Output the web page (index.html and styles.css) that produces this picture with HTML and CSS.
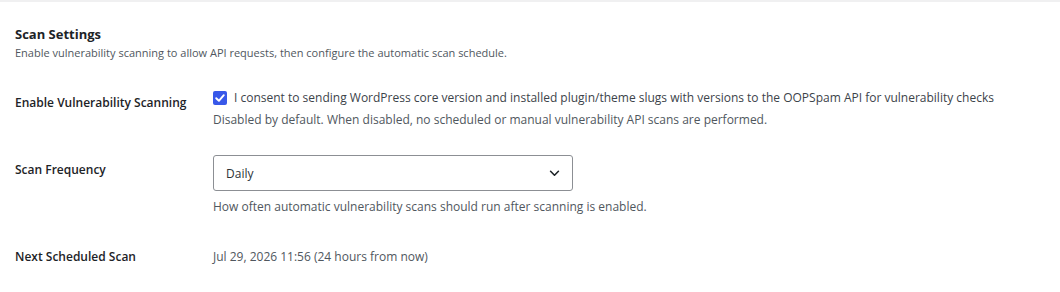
FILE: index.html
```html
<!DOCTYPE html>
<html lang="en">
<head>
  <meta charset="UTF-8" />
  <meta name="viewport" content="width=device-width, initial-scale=1" />
  <title>Scan Settings</title>
  <link rel="stylesheet" href="styles.css">
</head>
<body>
  <div class="settings-panel">
    <h2 class="section-title">Scan Settings</h2>
    <p class="section-desc">Enable vulnerability scanning to allow API requests, then configure the automatic scan schedule.</p>

    <div class="form-table">
      <div class="row">
        <div class="row-label">Enable Vulnerability Scanning</div>
        <div class="row-field">
          <label class="consent">
            <span class="checkbox">
              <svg viewBox="0 0 14 14" width="14" height="14"><path d="M3.2 7.2 L5.9 9.8 L10.8 4.2" fill="none" stroke="#fff" stroke-width="1.9" stroke-linecap="round" stroke-linejoin="round"/></svg>
            </span>
            I consent to sending WordPress core version and installed plugin/theme slugs with versions to the OOPSpam API for vulnerability checks
          </label>
          <p class="field-desc">Disabled by default. When disabled, no scheduled or manual vulnerability API scans are performed.</p>
        </div>
      </div>

      <div class="row">
        <div class="row-label">Scan Frequency</div>
        <div class="row-field">
          <div class="select">
            <span>Daily</span>
            <svg viewBox="0 0 12 8" width="11" height="7"><path d="M1.5 1.5 L6 6 L10.5 1.5" fill="none" stroke="#1d2327" stroke-width="1.8" stroke-linecap="round" stroke-linejoin="round"/></svg>
          </div>
          <p class="field-desc">How often automatic vulnerability scans should run after scanning is enabled.</p>
        </div>
      </div>

      <div class="row">
        <div class="row-label">Next Scheduled Scan</div>
        <div class="row-field">
          <span class="value">Jul 29, 2026 11:56 (24 hours from now)</span>
        </div>
      </div>
    </div>
  </div>
</body>
</html>
```

FILE: styles.css
```css
body {
  margin: 0;
  background: #fff;
  font-family: "Open Sans", Arial, sans-serif;
  color: #1d2327;
}
.settings-panel {
  border-top: 2px solid #f0f0f1;
  padding: 22px 15px 0;
}
.section-title {
  margin: 0;
  font-size: 13px;
  font-weight: 700;
  line-height: 20px;
}
.section-desc {
  margin: 0;
  font-size: 11px;
  line-height: 18px;
  color: #50575e;
}
.form-table {
  margin-top: 26px;
}
.row {
  display: grid;
  grid-template-columns: 198px 1fr;
  margin-bottom: 25px;
}
.row-label {
  font-size: 12px;
  font-weight: 600;
  line-height: 20px;
  padding-top: 5px;
}
.row-field {
  font-size: 12px;
  color: #3c434a;
}
.consent {
  display: flex;
  align-items: center;
  gap: 7px;
  line-height: 20px;
}
.checkbox {
  width: 14px;
  height: 14px;
  border-radius: 2px;
  background: #3858e9;
  display: flex;
}
.field-desc {
  margin: 2px 0 0;
  font-size: 12px;
  line-height: 20px;
  color: #50575e;
}
.select {
  width: 334px;
  height: 34px;
  border: 1px solid #8c8f94;
  border-radius: 3px;
  display: flex;
  align-items: center;
  justify-content: space-between;
  padding: 0 12px;
  color: #2c3338;
}
.select + .field-desc {
  margin-top: 6px;
}
.value {
  display: block;
  padding-top: 5px;
  color: #50575e;
  line-height: 20px;
}
```
